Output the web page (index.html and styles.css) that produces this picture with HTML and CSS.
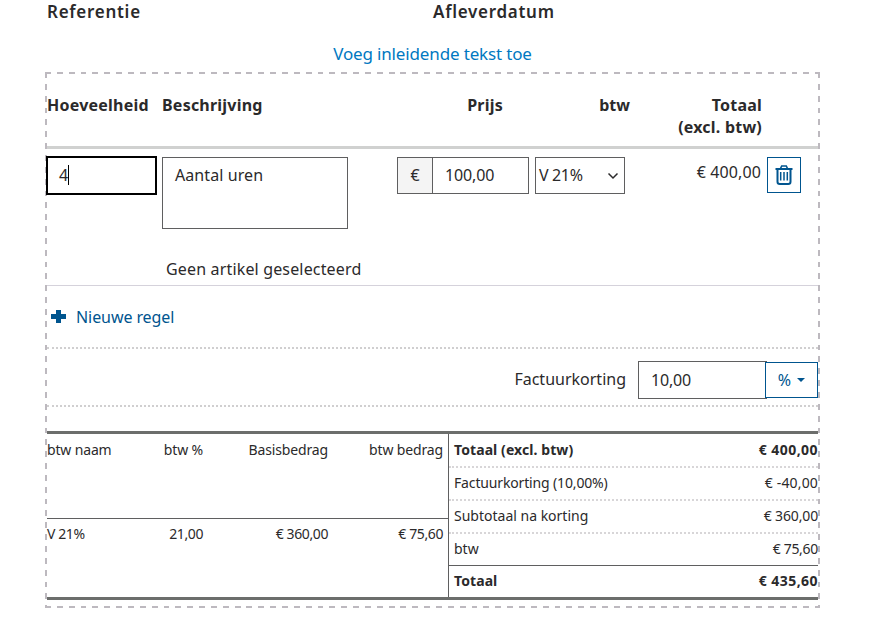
FILE: index.html
```
<!DOCTYPE html>
<html lang="nl">
<head>
    <meta charset="UTF-8">
    <meta name="viewport" content="width=device-width, initial-scale=1.0">
    <title>Factuur</title>
    <link rel="stylesheet" href="styles.css">
</head>
<body>
    <div class="page">
        <div class="meta">
            <span>Referentie</span>
            <span>Afleverdatum</span>
        </div>
        <div class="intro"><a class="intro-link">Voeg inleidende tekst toe</a></div>

        <div class="invoice">
            <div class="lines-head">
                <span>Hoeveelheid</span>
                <span>Beschrijving</span>
                <span class="right">Prijs</span>
                <span class="right head-vat">btw</span>
                <span class="right">Totaal<br>(excl. btw)</span>
            </div>

            <div class="line">
                <div class="qty"><span>4</span><span class="caret"></span></div>
                <div class="desc">
                    <div class="desc-field">Aantal uren</div>
                    <div class="no-article">Geen artikel geselecteerd</div>
                </div>
                <div class="price">
                    <span class="euro">€</span>
                    <span class="amount">100,00</span>
                </div>
                <div class="select">
                    <span class="select-text">V 21%</span>
                    <svg width="12" height="8" viewBox="0 0 12 8"><path d="M1.5 1.5L6 6l4.500-4.500" fill="none" stroke="#2b2a2b" stroke-width="1.500"/></svg>
                </div>
                <div class="line-total">€ 400,00</div>
                <div class="trash">
                    <svg width="18" height="20" viewBox="0 0 18 20" fill="none" stroke="#00558f">
                        <path d="M0.500 4h17" stroke-width="2"/>
                        <path d="M5.500 3.500L6.700 1h4.600l1.200 2.500" stroke-width="1.600"/>
                        <path d="M2.500 4.500v12.200q0 2.300 2.300 2.300h8.400q2.300 0 2.300-2.300V4.500" stroke-width="2"/>
                        <path d="M5.700 7v8.500M9 7v8.500M12.300 7v8.500" stroke-width="1.500"/>
                    </svg>
                </div>
            </div>

            <div class="new-line">
                <svg width="15" height="13" viewBox="0 0 15 13"><path d="M5 0h5v4h5v5h-5v4H5V9H0V4h5z" fill="#00558f"/></svg>
                <span class="new-text">Nieuwe regel</span>
            </div>

            <div class="discount">
                <span class="discount-label">Factuurkorting</span>
                <div class="discount-field">10,00</div>
                <div class="unit">
                    <span>%</span>
                    <svg width="8" height="4" viewBox="0 0 8 4"><path d="M0 0h8L4 4z" fill="#00558f"/></svg>
                </div>
            </div>

            <div class="summary">
                <div class="vat">
                    <div class="vat-row vat-head">
                        <span class="name">btw naam</span>
                        <span>btw %</span>
                        <span>Basisbedrag</span>
                        <span>btw bedrag</span>
                    </div>
                    <div class="vat-row vat-values">
                        <span class="name">V 21%</span>
                        <span>21,00</span>
                        <span>€ 360,00</span>
                        <span>€ 75,60</span>
                    </div>
                </div>
                <div class="totals">
                    <div class="total-row strong first"><span>Totaal (excl. btw)</span><span class="sum">€ 400,00</span></div>
                    <div class="total-row"><span class="total-label">Factuurkorting (10,00%)</span><span class="minus">€ -40,00</span></div>
                    <div class="total-row"><span>Subtotaal na korting</span><span class="total-label">€ 360,00</span></div>
                    <div class="total-row last"><span>btw</span><span class="small-sum">€ 75,60</span></div>
                    <div class="total-row strong grand"><span>Totaal</span><span class="sum">€ 435,60</span></div>
                </div>
            </div>
        </div>
    </div>
</body>
</html>
```

FILE: styles.css
```
* {
    box-sizing: border-box;
}
body {
    margin: 0;
    background: #fff;
    color: #2b2a2b;
    font-family: "Noto Sans", "Open Sans", sans-serif;
    font-size: 16px;
    line-height: 22px;
    white-space: nowrap;
}
svg {
    display: block;
    flex: none;
}
.page {
    width: 894px;
    height: 620px;
    padding: 1px 74px 0 45px;
    overflow: hidden;
}
.meta {
    display: grid;
    grid-template-columns: 386px 1fr;
    height: 42px;
    padding-left: 2px;
    font-size: 17px;
    font-weight: 600;
    letter-spacing: 0.720px;
}
.intro {
    height: 29px;
    text-align: center;
    font-size: 17px;
    letter-spacing: -0.150px;
}
.intro-link {
    color: #0078c1;
}
/* dashed frame, 6px on 6px off */
.invoice {
    width: 775px;
    height: 536px;
    padding: 2px;
    background:
        repeating-linear-gradient(90deg, #bdb9bf 0 5.900px, transparent 5.900px 11.850px) 0 0 / 100% 2px no-repeat,
        repeating-linear-gradient(90deg, #bdb9bf 0 5.900px, transparent 5.900px 11.850px) 0 100% / 100% 2px no-repeat,
        repeating-linear-gradient(#bdb9bf 0 5.900px, transparent 5.900px 11.850px) 0 0 / 2px 100% no-repeat,
        repeating-linear-gradient(#bdb9bf 0 5.900px, transparent 5.900px 11.850px) 100% 0 / 2px 100% no-repeat;
}
.right {
    text-align: right;
}
.lines-head {
    display: grid;
    grid-template-columns: 115px 240px 101px 127px 132px;
    height: 75px;
    padding-top: 20px;
    border-bottom: 3px solid #d0d1d0;
    font-weight: 700;
    letter-spacing: 0.220px;
}
.head-vat {
    letter-spacing: 0;
}
.line {
    display: flex;
    align-items: flex-start;
    height: 137px;
    padding-top: 8px;
    border-bottom: 1px solid #d5d2db;
}
.qty {
    display: flex;
    align-items: center;
    width: 111px;
    height: 39px;
    margin: -1px 5px 0 -1px;
    padding-left: 11px;
    padding-bottom: 1px;
    border: 2px solid #000;
    background: #fff;
}
.caret {
    width: 1px;
    height: 20px;
    background: #000;
}
.desc {
    width: 235px;
}
.desc-field {
    width: 186px;
    height: 72px;
    padding: 6px 12px;
    border: 1px solid #5f5f60;
    letter-spacing: 0.080px;
}
.no-article {
    padding: 29px 0 0 4px;
    letter-spacing: 0.160px;
}
.price {
    display: flex;
    align-items: center;
    width: 132px;
    height: 37px;
    margin-right: 6px;
    border: 1px solid #5f5f60;
}
.euro {
    width: 35px;
    height: 35px;
    margin-right: 12px;
    border-right: 1px solid #5f5f60;
    background: #f4f4f4;
    line-height: 35px;
    text-align: center;
}
.amount {
    padding-bottom: 2px;
    letter-spacing: -0.150px;
}
.select {
    display: flex;
    align-items: center;
    justify-content: space-between;
    width: 90px;
    height: 37px;
    padding: 0 5px 0 3px;
    border: 1px solid #5f5f60;
}
.select-text {
    padding-bottom: 2px;
    letter-spacing: -0.350px;
}
.line-total {
    width: 136px;
    padding-top: 4px;
    text-align: right;
    letter-spacing: 0.100px;
}
.trash {
    display: flex;
    align-items: center;
    justify-content: center;
    width: 34px;
    height: 36px;
    margin-left: 6px;
    border: 1px solid #00558f;
}
.new-line {
    display: flex;
    align-items: center;
    gap: 10px;
    height: 63px;
    padding-left: 4px;
    border-bottom: 2px dotted #d0cfd0;
    color: #00558f;
}
.new-text {
    letter-spacing: -0.080px;
}
.discount {
    display: flex;
    align-items: center;
    justify-content: flex-end;
    height: 58px;
    padding-top: 6px;
    border-bottom: 2px dotted #d0cfd0;
}
.discount-label {
    margin-right: 12px;
    padding-bottom: 2px;
}
.discount-field {
    width: 129px;
    height: 38px;
    margin-right: -2px;
    padding: 7px 12px;
    border: 1px solid #5f5f60;
    letter-spacing: -0.200px;
}
.unit {
    display: flex;
    align-items: center;
    justify-content: center;
    gap: 6px;
    width: 53px;
    height: 36px;
    border: 1px solid #00558f;
    background: #fff;
    color: #00558f;
}
.summary {
    display: grid;
    grid-template-columns: 402px 1fr;
    height: 169px;
    margin-top: 24px;
    border-top: 3px solid #6c6e6c;
    border-bottom: 3px solid #6c6e6c;
    font-size: 14px;
}
.vat {
    border-right: 1px solid #5f5f60;
}
.vat-row {
    display: grid;
    grid-template-columns: 76px 80px 125px 115px;
    padding-top: 5px;
    text-align: right;
    letter-spacing: -0.150px;
}
.name {
    text-align: left;
}
.vat-head {
    height: 85px;
    border-bottom: 1px solid #5f5f60;
}
.vat-values {
    padding-top: 4px;
    letter-spacing: -0.400px;
}
.total-row {
    display: flex;
    justify-content: space-between;
    height: 33px;
    padding: 4px 0 0 5px;
    border-bottom: 2px dotted #d8d6d8;
}
.first {
    height: 34px;
    padding-top: 5px;
}
.last {
    height: 32px;
    border-bottom: 1px solid #5f5f60;
}
.grand {
    height: 31px;
    border-bottom: 0;
}
.strong {
    font-weight: 700;
    letter-spacing: 0.080px;
}
.total-label {
    letter-spacing: -0.150px;
}
.minus {
    letter-spacing: 0.150px;
}
.small-sum {
    letter-spacing: -0.300px;
}
.sum {
    letter-spacing: 0.450px;
}
```
